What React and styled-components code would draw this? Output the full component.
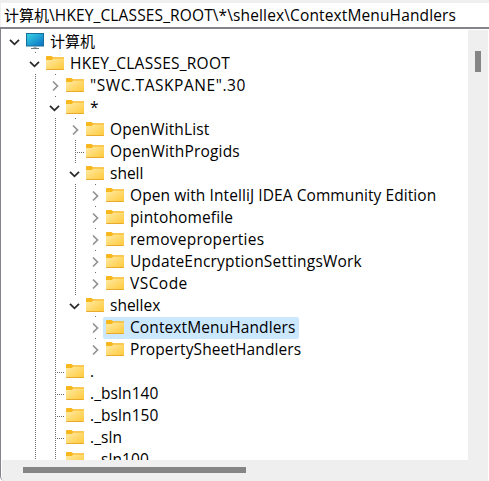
import React from 'react';
import styled, { createGlobalStyle } from 'styled-components';

const GlobalStyle = createGlobalStyle`
  * { box-sizing: border-box; }
  body {
    margin: 0;
    overflow: hidden;
    background: #fff;
    color: #000;
    font: 15.5px/22px "Open Sans", "Noto Sans CJK SC", sans-serif;
  }
`;

const Window = styled.main`
  width: 489px;
  height: 481px;
  display: flex;
  flex-direction: column;
  background: #fff;
`;

const AddressBar = styled.header`
  height: 27px;
  flex: none;
  display: flex;
  border-top: 3px solid #efefef;
  border-left: 1px solid #efefef;
  padding: 1px 0 0 3px;
  line-height: 23px;
  white-space: pre;
  overflow: hidden;
`;

const Panel = styled.section`
  flex: 1;
  min-height: 0;
  display: grid;
  grid-template: 431px 1fr / 467px 20px;
  border-top: 2px solid #85848c;
  border-left: 1px solid #85848c;
  border-bottom-left-radius: 5px;
  overflow: hidden;
`;

const Tree = styled.div`
  padding-top: 2px;
  overflow: hidden;
`;

const Row = styled.div`
  height: 22px;
  display: flex;
`;

const dots = (direction) =>
  `repeating-linear-gradient(to ${direction}, #6e6e6e 0 1px, transparent 1px 2px)`;

const Cell = styled.div`
  width: 20px;
  height: 22px;
  flex: none;
  display: grid;
  grid-template: 22px / 20px;
  margin-left: ${(p) => (p.$first ? 4 : 0)}px;
`;

const Layer = styled.div`
  grid-area: 1 / 1;
  display: flex;
`;

const Guide = styled.i`
  width: 1px;
  height: ${(p) => (p.$tail ? 1 : 21)}px;
  margin: ${(p) => (p.$tail ? 21 : 1)}px 0 0 10px;
  background: ${dots('bottom')};
`;

const Branch = styled.i`
  width: 7px;
  height: 1px;
  margin: 11px 0 0 1px;
  background: ${dots('right')};
`;

const Item = styled.div`
  height: 22px;
  display: flex;
  padding: 0 4px 0 2px;
  margin-left: -2px;
  border-radius: 2px;
  background: ${(p) => (p.$selected ? '#cce8ff' : 'transparent')};
`;

const Label = styled.span`
  margin-left: 5px;
  line-height: 21px;
  white-space: pre;
  letter-spacing: ${(p) => p.$track || 0}px;
  font-size: ${(p) => p.$size || 15.5}px;
`;

const PathPart = styled.span`
  letter-spacing: ${(p) => p.$track || 0}px;
  font-size: ${(p) => p.$size || 15.5}px;
`;

const VerticalBar = styled.div`
  margin-top: 1px;
  padding: 21px 0 0 7px;
  background: #efefef;
`;

const HorizontalBar = styled.div`
  grid-column: 1 / 3;
  margin-left: 1px;
  padding: 7px 0 0 21px;
  background: #efefef;
  border-bottom-left-radius: 4px;
`;

const Thumb = styled.div`
  width: ${(p) => p.$w}px;
  height: ${(p) => p.$h}px;
  background: #858585;
`;

const Folder = () => (
  <svg width="20" height="22" viewBox="-1 0 20 22">
    <defs>
      <linearGradient id="folder" x1="0" y1="0" x2="1" y2="1">
        <stop offset="0" stopColor="#ffeaa6" />
        <stop offset="1" stopColor="#ffc938" />
      </linearGradient>
    </defs>
    <path d="M0 4Q0 3 1 3H5.5L7 4.3H17.5Q18 4.3 18 5V8H0Z" fill="#f8b71c" />
    <path d="M0 7H5.7L7.2 5.4H18V16.3Q18 17 17 17H1Q0 17 0 16.3Z" fill="url(#folder)" />
    <path d="M0 16H18Q18 17 17 17H1Q0 17 0 16Z" fill="#eaab2c" />
  </svg>
);

const Computer = () => (
  <svg width="20" height="22" viewBox="-1 0 20 22">
    <defs>
      <linearGradient id="screen" x1="0" y1="0" x2="1" y2="1">
        <stop offset="0" stopColor="#38d5e4" />
        <stop offset="1" stopColor="#0b6fc4" />
      </linearGradient>
    </defs>
    <rect x="0.5" y="2.5" width="17" height="12.5" fill="url(#screen)" stroke="#186e9b" />
    <path d="M7.5 15.5H10.5V17H7.5Z" fill="#a5acb1" />
    <path d="M5 17H13V18H5Z" fill="#697780" />
  </svg>
);

const Chevron = ({ open }) => (
  <svg width="20" height="22" viewBox="0 0 20 22" fill="none">
    {open ? (
      <path d="M5 8.8L9.5 13.3L14 8.8" stroke="#2b2b2b" strokeWidth="1.8" />
    ) : (
      <path d="M8 6.5L12.5 11L8 15.5" stroke="#929292" strokeWidth="1.7" />
    )}
  </svg>
);

// guides: columns carrying a full dotted line; tails: columns with only the joining dot
const rows = [
  { depth: 0, text: '计算机', state: 'open', tails: [1], size: 15 },
  { depth: 1, text: 'HKEY_CLASSES_ROOT', track: 0.25, state: 'open', tails: [1, 2] },
  { depth: 2, text: '"SWC.TASKPANE".30', track: 0.55, state: 'closed', guides: [1], tails: [2] },
  { depth: 2, text: '*', state: 'open', guides: [1], tails: [2, 3] },
  { depth: 3, text: 'OpenWithList', track: 0.12, state: 'closed', guides: [1, 2], tails: [3] },
  { depth: 3, text: 'OpenWithProgids', track: 0.18, guides: [1, 2, 3] },
  { depth: 3, text: 'shell', state: 'open', guides: [1, 2], tails: [3, 4] },
  { depth: 4, text: 'Open with IntelliJ IDEA Community Edition', track: 0.08, state: 'closed', guides: [1, 2, 3], tails: [4] },
  { depth: 4, text: 'pintohomefile', track: 0.13, state: 'closed', guides: [1, 2, 3], tails: [4] },
  { depth: 4, text: 'removeproperties', track: 0.25, state: 'closed', guides: [1, 2, 3], tails: [4] },
  { depth: 4, text: 'UpdateEncryptionSettingsWork', track: 0.21, state: 'closed', guides: [1, 2, 3], tails: [4] },
  { depth: 4, text: 'VSCode', track: 0.45, state: 'closed', guides: [1, 2, 3] },
  { depth: 3, text: 'shellex', state: 'open', guides: [1, 2], tails: [4] },
  { depth: 4, text: 'ContextMenuHandlers', track: 0.1, state: 'closed', guides: [1, 2], tails: [4], selected: true },
  { depth: 4, text: 'PropertySheetHandlers', track: 0.1, state: 'closed', guides: [1, 2] },
  { depth: 2, text: '.', guides: [1, 2] },
  { depth: 2, text: '._bsln140', track: 0.08, guides: [1, 2] },
  { depth: 2, text: '._bsln150', track: 0.08, guides: [1, 2] },
  { depth: 2, text: '._sln', track: 0.08, guides: [1, 2] },
  { depth: 2, text: '._sln100', track: 0.08, guides: [1, 2] },
];

const TreeRow = ({ depth, text, state, guides = [], tails = [], selected, track, size }) => (
  <Row>
    {Array.from({ length: depth + 1 }, (_, col) => (
      <Cell key={col} $first={col === 0}>
        <Layer>
          {(guides.includes(col) || tails.includes(col)) && <Guide $tail={tails.includes(col)} />}
          {col === depth && !state && <Branch />}
        </Layer>
        {col === depth && state && (
          <Layer>
            <Chevron open={state === 'open'} />
          </Layer>
        )}
      </Cell>
    ))}
    <Item $selected={selected}>
      <Cell>
        <Layer>{tails.includes(depth + 1) && <Guide $tail />}</Layer>
        <Layer>{depth === 0 ? <Computer /> : <Folder />}</Layer>
      </Cell>
      <Label $track={track} $size={size}>{text}</Label>
    </Item>
  </Row>
);

export default function App() {
  return (
    <Window>
      <GlobalStyle />
      <AddressBar>
        <PathPart $size={15}>计算机</PathPart>
        <PathPart $track={0.13}>{'\\HKEY_CLASSES_ROOT\\*\\shellex\\ContextMenuHandlers'}</PathPart>
      </AddressBar>
      <Panel>
        <Tree>
          {rows.map((row) => (
            <TreeRow key={row.text} {...row} />
          ))}
        </Tree>
        <VerticalBar>
          <Thumb $w={6} $h={21} />
        </VerticalBar>
        <HorizontalBar>
          <Thumb $w={223} $h={6} />
        </HorizontalBar>
      </Panel>
    </Window>
  );
}
